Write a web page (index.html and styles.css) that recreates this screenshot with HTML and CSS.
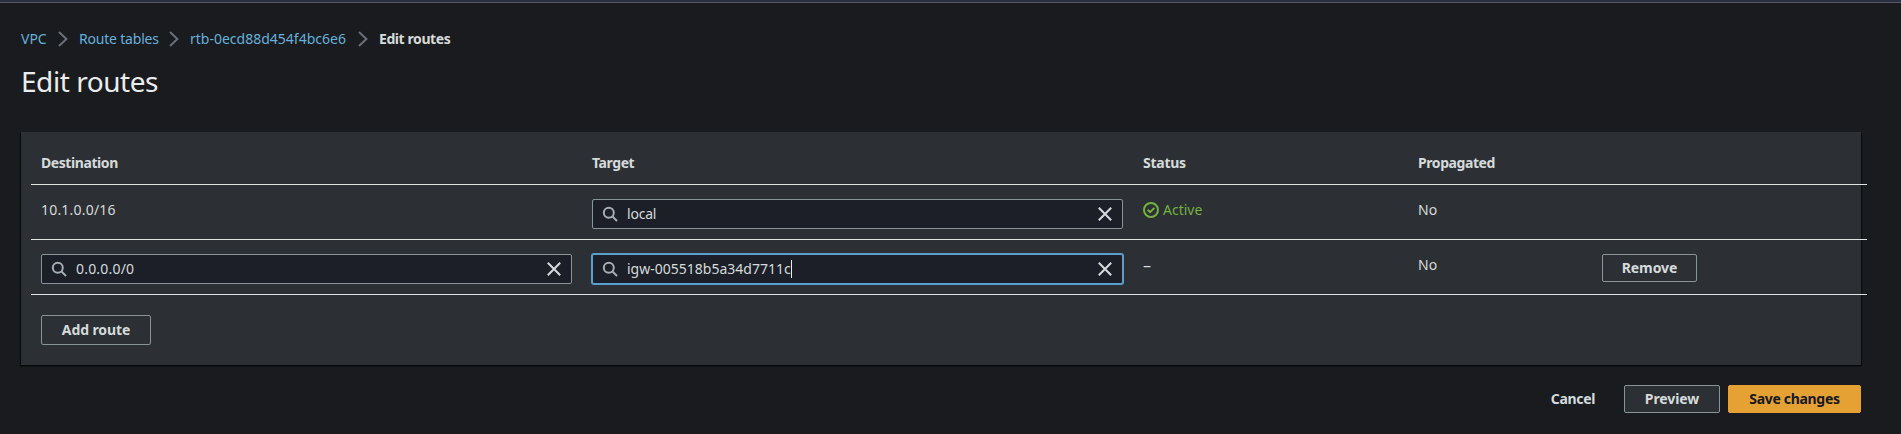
FILE: index.html
```html
<!DOCTYPE html>
<html lang="en">
<head>
<meta charset="utf-8">
<title>Edit routes</title>
<link rel="stylesheet" href="styles.css">
</head>
<body>
<svg width="0" height="0" class="defs">
  <symbol id="search" viewBox="0 0 16 16"><circle cx="6.8" cy="6.8" r="5"/><path d="M10.5 10.5L15 15"/></symbol>
  <symbol id="close" viewBox="0 0 16 16"><path d="M1.8 1.8l12.4 12.4M14.2 1.8L1.8 14.2"/></symbol>
  <symbol id="chevron" viewBox="0 0 10 16"><path d="M1 1l7.4 7L1 15"/></symbol>
  <symbol id="check" viewBox="0 0 16 16"><circle cx="8" cy="8" r="7"/><path d="M4.6 7.7l2.5 2.5 4.3-4.3"/></symbol>
</svg>
<div class="topbar"></div>
<main class="page">
  <nav class="crumbs">
    <a class="c-vpc">VPC</a><svg class="chev"><use href="#chevron"/></svg>
    <a class="c-tables">Route tables</a><svg class="chev"><use href="#chevron"/></svg>
    <a class="c-id">rtb-0ecd88d454f4bc6e6</a><svg class="chev"><use href="#chevron"/></svg>
    <b class="c-current">Edit routes</b>
  </nav>
  <h1><span>Edit routes</span></h1>
  <section class="panel">
    <div class="table">
      <div class="row head">
        <div>Destination</div><div>Target</div><div class="t-status">Status</div><div>Propagated</div><div></div>
      </div>
      <div class="row">
        <div class="text"><span class="cidr">10.1.0.0/16</span></div>
        <div><div class="field"><svg class="search"><use href="#search"/></svg><span class="t-local">local</span><svg class="close"><use href="#close"/></svg></div></div>
        <div class="text active"><svg class="check"><use href="#check"/></svg><span>Active</span></div>
        <div class="text"><span>No</span></div>
        <div></div>
      </div>
      <div class="row">
        <div><div class="field"><svg class="search"><use href="#search"/></svg><span class="cidr">0.0.0.0/0</span><svg class="close"><use href="#close"/></svg></div></div>
        <div><div class="field focused"><svg class="search"><use href="#search"/></svg><span>igw-005518b5a34d7711c</span><i class="caret"></i><svg class="close"><use href="#close"/></svg></div></div>
        <div class="text"><span class="dash">–</span></div>
        <div class="text"><span>No</span></div>
        <div><button class="btn remove"><span>Remove</span></button></div>
      </div>
    </div>
    <button class="btn add"><span>Add route</span></button>
  </section>
  <footer class="actions">
    <button class="btn cancel"><span>Cancel</span></button>
    <button class="btn preview"><span>Preview</span></button>
    <button class="btn save"><span>Save changes</span></button>
  </footer>
</main>
</body>
</html>
```
FILE: styles.css
```css
* { box-sizing: border-box; }
body { margin: 0; height: 434px; overflow: hidden; background: #1a1b1f; color: #d5dbdb; font: 14px/22px "Noto Sans", "Open Sans", sans-serif; }
.defs { display: none; }
svg { fill: none; stroke: currentColor; stroke-width: 2; flex: none; }
.topbar { height: 3px; background: #2a2f3f; border-bottom: 1px solid #565a68; }
.page { padding: 25px 40px 0 21px; }
.crumbs { display: flex; align-items: center; height: 22px; color: #64b1dd; }
.chev { width: 10px; height: 16px; color: #697078; margin: 0 11px; }
.crumbs a, .crumbs b { white-space: nowrap; }
.c-vpc { width: 26px; }
.c-tables { width: 79px; letter-spacing: -0.2px; }
.c-id { width: 157px; }
.c-current { color: #d5dbdb; letter-spacing: -0.42px; }
h1 { margin: 13px 0 33px; height: 36px; font-size: 28px; line-height: 36px; font-weight: 400; letter-spacing: -0.45px; color: #eaeded; }
.panel { height: 233px; background: #2c2f33; box-shadow: 0 1px 1px #08090b, 1px 1px 1px #0d0e11, -1px 1px 1px #0d0e11; padding: 10px 0 0 10px; }
.table { width: 1836px; }
.row { display: grid; grid-template-columns: 551px 551px 275px 184px 275px; height: 55px; border-bottom: 1px solid #e2e4e3; }
.row > div { padding: 14px 10px 0; }
.head { height: 43px; font-weight: 700; letter-spacing: -0.42px; }
.row.head > div { padding-top: 10px; }
.head .t-status { letter-spacing: -0.25px; }
.cidr { letter-spacing: 0.2px; }
.t-local { letter-spacing: -0.2px; }
.dash { font-size: 16px; }
.field { display: flex; align-items: center; height: 30px; background: #1c1f28; border: 1px solid #879596; border-radius: 2px; padding: 0 9px; }
.focused { border-color: #5a9fcf; box-shadow: 0 0 0 1px #5a9fcf; }
.search { width: 16px; height: 16px; color: #a5aeb0; margin-right: 9px; }
.close { width: 16px; height: 16px; margin-left: auto; }
.caret { width: 1px; height: 18px; background: #eaeded; }
.active { display: flex; align-items: center; height: 36px; color: #76b041; gap: 4px; }
.check { width: 16px; height: 16px; }
.btn { display: block; height: 28px; padding: 0; border: 1px solid #879596; border-radius: 2px; background: #2c2f33; color: #d5dbdb; font: 700 14px/22px "Noto Sans", "Open Sans", sans-serif; letter-spacing: -0.1px; white-space: nowrap; }
.remove { width: 95px; }
.add { width: 110px; height: 30px; margin: 20px 0 0 10px; }
.actions { display: flex; justify-content: flex-end; margin-top: 20px; }
.cancel { width: 84px; border-color: transparent; background: none; margin-right: 9px; letter-spacing: -0.3px; }
.preview { width: 96px; margin-right: 8px; }
.save { width: 133px; background: #e5a134; border-color: #e5a134; color: #16191f; letter-spacing: -0.32px; }
```
